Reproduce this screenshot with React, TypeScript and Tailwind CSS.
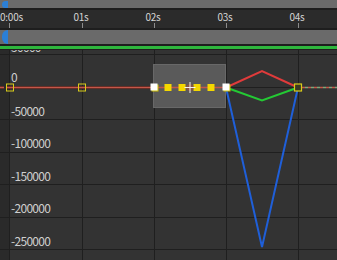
import React from "react";

const ticks = [9, 82, 154, 226, 298];
const rulerLabels = ["0:00s", "01s", "02s", "03s", "04s"];
const rows = [4, 37, 69, 102, 134, 167, 199];
const valueLabels = [
   { text: "50000", y: 1.5 },
   { text: "0", y: 32 },
   { text: "-50000", y: 66 },
   { text: "-100000", y: 97.5 },
   { text: "-150000", y: 130.5 },
   { text: "-200000", y: 163 },
   { text: "-250000", y: 196 },
];
const selectedKeys = [168, 182, 197, 211];

const Handle: React.FC<{ h: string }> = ({ h }) => (
   <div className={`ml-[2px] w-[6px] rounded-l-full bg-[#2b7fd6] ${h}`} />
);

const App: React.FC = () => {
   const font = { fontFamily: '"Noto Sans CJK JP", "DejaVu Sans", sans-serif' };

   return (
      <div className="flex h-[260px] w-[337px] flex-col overflow-hidden bg-[#1e1e1e]" style={font}>
         {/* top scroll bar */}
         <div className="flex h-[8px] items-end bg-[#6b6b6b]">
            <Handle h="h-[7px]" />
         </div>
         <div className="h-[2px]" />

         {/* time ruler */}
         <div className="h-[18px] bg-[#2b2b2b]">
            <svg width="337" height="18" overflow="visible" className="block overflow-visible">
               {ticks.map((x, i) => (
                  <g key={x}>
                     <line x1={x + 0.5} x2={x + 0.5} y1={13} y2={18} stroke="#8c8c8c" />
                     <text
                        x={i === 0 ? 23 : x - 1}
                        y={10.5}
                        textAnchor={i === 0 ? "end" : "middle"}
                        fontSize="10"
                        letterSpacing="-0.2"
                        fill="#d4d4d4"
                        style={font}
                     >
                        {rulerLabels[i]}
                     </text>
                  </g>
               ))}
            </svg>
         </div>
         <div className="h-[2px]" />

         {/* range bar */}
         <div className="flex h-[14px] bg-[#6a6a6a]">
            <Handle h="h-[14px]" />
         </div>
         <div className="h-[2px]" />
         <div className="h-[3px] bg-[#2eb63d]" />
         <div className="h-[1px]" />

         {/* curve editor */}
         <div className="relative h-[210px] overflow-hidden bg-[#333333]">
            <svg width="337" height="210" className="absolute inset-0">
               <rect x="0" y="0" width="9" height="210" fill="#2a2a2a" />
               {ticks.map((x) => (
                  <line key={x} x1={x + 0.5} x2={x + 0.5} y1={0} y2={210} stroke="#1f1f1f" />
               ))}
               {rows.map((y) => (
                  <line key={y} x1={0} x2={337} y1={y + 0.5} y2={y + 0.5} stroke="#1f1f1f" />
               ))}

               {valueLabels.map((l) => (
                  <text key={l.text} x={11} y={l.y} fontSize="12" letterSpacing="-0.7" fill="#cfcfcf" style={font}>
                     {l.text}
                  </text>
               ))}

               {/* selection box */}
               <rect x="153.5" y="14.5" width="72" height="43" fill="#5a5a5a" stroke="#686868" />

               {/* flat segment */}
               <line x1="0" x2="154" y1="37.5" y2="37.5" stroke="#4a211b" strokeWidth="3" />
               <line x1="0" x2="226" y1="37.5" y2="37.5" stroke="#c4574a" strokeWidth="1.6" />
               <rect x="4" y="36" width="3" height="3" fill="#2a2a2a" />

               {/* spikes */}
               <polyline points="226,37.5 262,21 298,37.5" fill="none" stroke="#e03b3b" strokeWidth="2" />
               <polyline points="226,37.5 262,50.5 298,37.5" fill="none" stroke="#24c934" strokeWidth="2" />
               <polyline points="226,37.5 262,197 298,37.5" fill="none" stroke="#1f5fd9" strokeWidth="2" />

               {/* extrapolation */}
               <line x1="302" x2="337" y1="37.5" y2="37.5" stroke="#c4574a" strokeWidth="1.5" strokeDasharray="3 3" />
               <line x1="305" x2="337" y1="37.5" y2="37.5" stroke="#7fa87a" strokeWidth="1.5" strokeDasharray="3 3" />

               {/* keys */}
               <rect x="6.5" y="34" width="7" height="7" fill="none" stroke="#d9cc1a" strokeWidth="1" />
               <rect x="78.5" y="34" width="7" height="7" fill="none" stroke="#d9cc1a" strokeWidth="1" />
               <rect x="294.5" y="34" width="7" height="7" fill="#3b3a22" stroke="#d9cc1a" strokeWidth="1.2" />

               {selectedKeys.map((x) => (
                  <rect key={x} x={x - 3.5} y="34" width="7" height="7" fill="#f4d800" />
               ))}
               <rect x="151.5" y="34.5" width="7" height="7" fill="#cfc000" />
               <rect x="150.5" y="33.5" width="7" height="7" fill="#ffffff" />
               <rect x="223.5" y="34.5" width="7" height="7" fill="#cfc000" />
               <rect x="222.5" y="33.5" width="7" height="7" fill="#ffffff" />

               {/* pivot */}
               <circle cx="190" cy="37.5" r="3.5" fill="#8a5545" />
               <line x1="190" x2="190" y1="32" y2="43" stroke="#f2f2f2" strokeWidth="1" />
               <line x1="184.5" x2="195.5" y1="37.5" y2="37.5" stroke="#f2f2f2" strokeWidth="1" />
            </svg>
         </div>
      </div>
   );
};

export default App;
